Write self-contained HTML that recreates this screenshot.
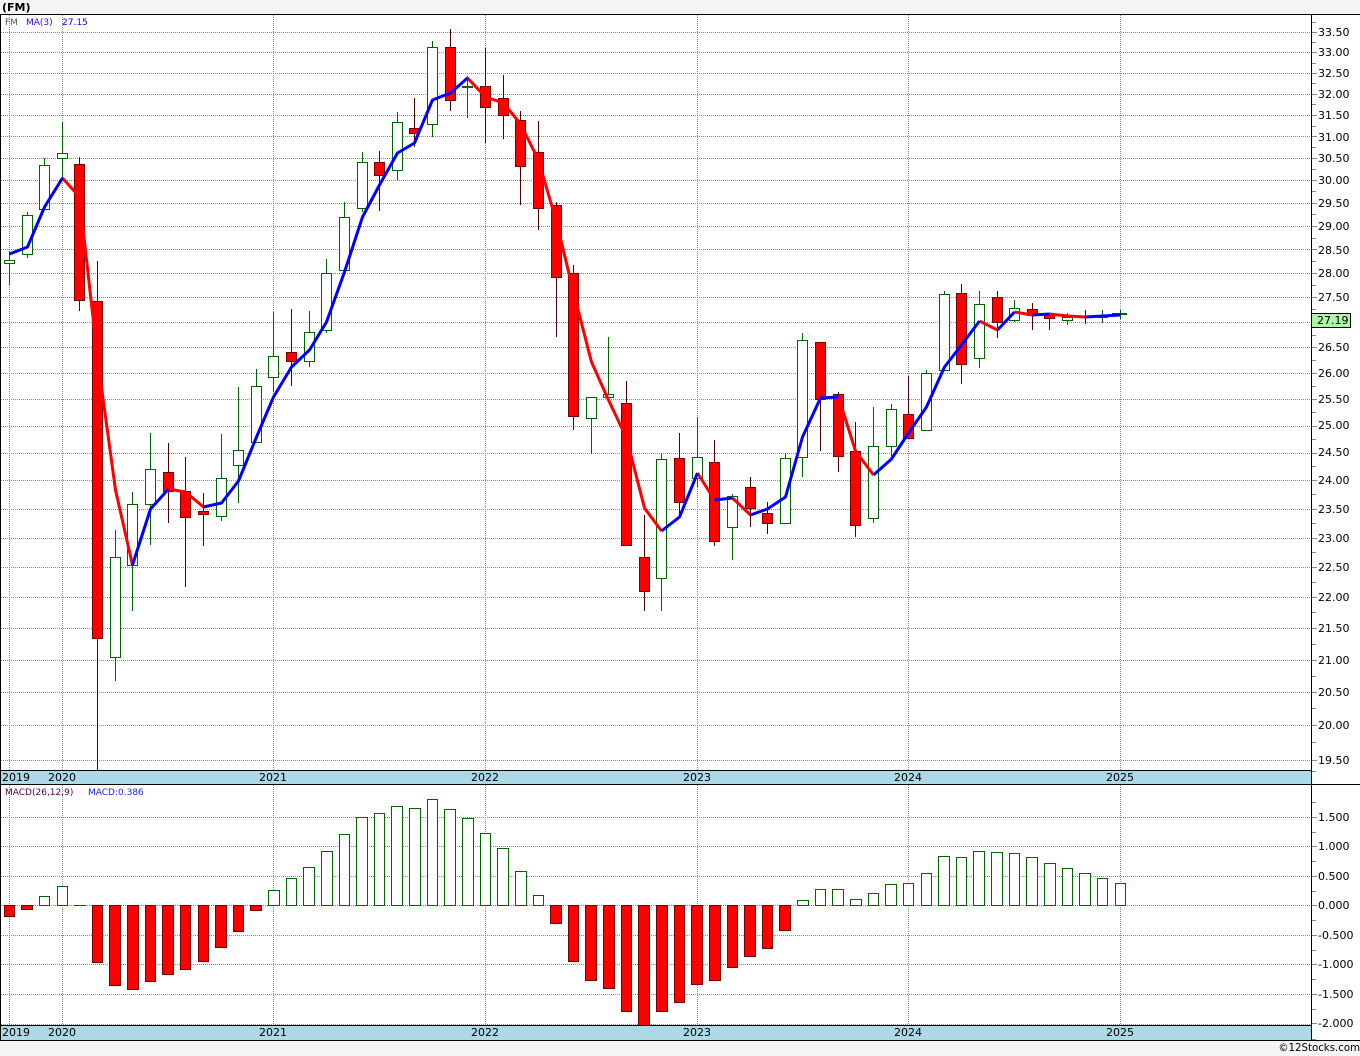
<!DOCTYPE html>
<html><head><meta charset="utf-8"><title>(FM)</title>
<style>
html,body{margin:0;padding:0;background:#f4f4f4}
svg{display:block;font-family:"DejaVu Sans","Liberation Sans",sans-serif}
text{fill:#000;font-size:11px}
.c{shape-rendering:crispEdges;fill:none}
.s{font-size:9px}
</style></head><body>
<svg width="1360" height="1056" viewBox="0 0 1360 1056" xmlns="http://www.w3.org/2000/svg">
<rect width="1360" height="1056" fill="#f4f4f4"/>
<rect x="0" y="14" width="1360" height="1027" fill="#fff"/>
<rect x="1" y="771" width="1310" height="13" fill="#add8e6"/>
<rect x="1" y="1026" width="1310" height="14" fill="#add8e6"/>

<path class="c" stroke="#8c8c8c" stroke-dasharray="1 1" d="M1 32.5H1311M1 52.5H1311M1 73.5H1311M1 94.5H1311M1 115.5H1311M1 136.5H1311M1 158.5H1311M1 180.5H1311M1 203.5H1311M1 226.5H1311M1 249.5H1311M1 273.5H1311M1 297.5H1311M1 322.5H1311M1 347.5H1311M1 373.5H1311M1 399.5H1311M1 426.5H1311M1 453.5H1311M1 480.5H1311M1 509.5H1311M1 538.5H1311M1 567.5H1311M1 597.5H1311M1 628.5H1311M1 660.5H1311M1 692.5H1311M1 725.5H1311M1 760.5H1311M1 817.5H1311M1 846.5H1311M1 876.5H1311M1 905.5H1311M1 935.5H1311M1 964.5H1311M1 994.5H1311M1 1024.5H1311"/>
<path class="c" stroke="#8c8c8c" stroke-dasharray="1 1" d="M9.5 15V770M62.5 15V770M273.5 15V770M485.5 15V770M697.5 15V770M908.5 15V770M1120.5 15V770M9.5 785V1025M62.5 785V1025M273.5 785V1025M485.5 785V1025M697.5 785V1025M908.5 785V1025M1120.5 785V1025"/>

<!-- green wicks -->
<path class="c" stroke="#006400" d="M9.5 251V285M27.5 212V258M44.5 158V209M62.5 122V178M115.5 530V681M132.5 492V611M150.5 433V545M221.5 434V521M238.5 387V503M256.5 369V443M273.5 312V392M309.5 311V367M326.5 259V333M344.5 202V271M362.5 152V212M397.5 112V180M432.5 41V137M467.5 76V118M591.5 397V454M608.5 337V397M661.5 454V611M697.5 417V487M732.5 494V560M785.5 453V523M802.5 333V477M873.5 407V523M891.5 404V457M926.5 370V430M944.5 291V370M979.5 291V368M1014.5 300V322M1067.5 313V325M1102.5 310V323M1120.5 310V319"/>
<!-- green bodies -->
<path class="c" stroke="#006400" style="fill:#fff" d="M4.5 260.5h10v3h-10zM22.5 215.5h10v39h-10zM39.5 165.5h10v44h-10zM57.5 153.5h10v5h-10zM110.5 557.5h10v100h-10zM127.5 504.5h10v61h-10zM145.5 469.5h10v35h-10zM216.5 478.5h10v38h-10zM233.5 450.5h10v15h-10zM251.5 386.5h10v56h-10zM268.5 356.5h10v21h-10zM304.5 332.5h10v29h-10zM321.5 273.5h10v57h-10zM339.5 217.5h10v53h-10zM357.5 162.5h10v46h-10zM392.5 122.5h10v48h-10zM427.5 47.5h10v77h-10zM586.5 397.5h10v21h-10zM603.5 394.5h10v3h-10zM656.5 459.5h10v119h-10zM692.5 457.5h10v21h-10zM727.5 496.5h10v31h-10zM780.5 458.5h10v65h-10zM797.5 340.5h10v117h-10zM868.5 446.5h10v72h-10zM886.5 409.5h10v37h-10zM921.5 373.5h10v57h-10zM939.5 294.5h10v76h-10zM974.5 304.5h10v54h-10zM1009.5 308.5h10v12h-10zM1062.5 317.5h10v3h-10zM1097.5 316.5h10v1h-10z"/>
<path class="c" stroke="#006400" stroke-width="2" d="M462 87h11M1112 314h15"/>

<!-- red wicks -->
<path class="c" stroke="#500000" d="M79.5 157V311M97.5 261V771M168.5 443V523M185.5 457V587M203.5 493V546M291.5 309V386M379.5 151V211M414.5 98V147M450.5 29V111M485.5 48V143M503.5 75V139M520.5 111V205M538.5 121V230M556.5 202V337M573.5 265V430M626.5 381V545M644.5 515V611M679.5 433V517M714.5 440V546M750.5 477V527M767.5 502V534M820.5 342V451M838.5 392V472M855.5 422V537M908.5 376V438M961.5 284V384M997.5 291V338M1032.5 303V330M1049.5 313V330M1085.5 310V324"/>
<!-- red bodies -->
<path class="c" stroke="#7a0000" style="fill:#f00" d="M74.5 164.5h10v136h-10zM92.5 301.5h10v337h-10zM163.5 472.5h10v19h-10zM180.5 491.5h10v26h-10zM198.5 511.5h10v3h-10zM286.5 352.5h10v9h-10zM374.5 162.5h10v13h-10zM409.5 128.5h10v5h-10zM445.5 47.5h10v53h-10zM480.5 86.5h10v21h-10zM498.5 98.5h10v17h-10zM515.5 120.5h10v46h-10zM533.5 152.5h10v56h-10zM551.5 205.5h10v72h-10zM568.5 273.5h10v143h-10zM621.5 403.5h10v142h-10zM639.5 557.5h10v34h-10zM674.5 458.5h10v44h-10zM709.5 462.5h10v79h-10zM745.5 487.5h10v21h-10zM762.5 513.5h10v10h-10zM815.5 342.5h10v57h-10zM833.5 394.5h10v62h-10zM850.5 451.5h10v74h-10zM903.5 414.5h10v24h-10zM956.5 293.5h10v71h-10zM992.5 297.5h10v25h-10zM1027.5 309.5h10v6h-10zM1044.5 313.5h10v5h-10zM1080.5 316.5h10v1h-10z"/>

<!-- MA(3) -->
<g fill="none" stroke-width="3" stroke-linejoin="round" stroke-linecap="butt">
<g stroke="#f00">
<polyline points="62.5,178 79.5,197 97.5,358 115.5,490 132.5,565"/>
<polyline points="168.5,489 185.5,492 203.5,507"/>
<polyline points="467.5,78 485.5,97 503.5,103 520.5,124 538.5,160 556.5,222 573.5,292 591.5,362 608.5,400 626.5,438 644.5,508 661.5,531"/>
<polyline points="697.5,473 714.5,500"/>
<polyline points="732.5,498 750.5,515"/>
<polyline points="838.5,397 855.5,451 873.5,475"/>
<polyline points="979.5,321 997.5,330"/>
<polyline points="1014.5,312 1032.5,315"/>
<polyline points="1049.5,314 1067.5,316 1085.5,317"/>
</g>
<g stroke="#00f">
<polyline points="9.5,254 27.5,247 44.5,207 62.5,178"/>
<polyline points="132.5,565 150.5,509 168.5,489"/>
<polyline points="203.5,507 221.5,503 238.5,481 256.5,437 273.5,397 291.5,367 309.5,350 326.5,322 344.5,272 362.5,217 379.5,185 397.5,153 414.5,143 432.5,100 450.5,93 467.5,78"/>
<polyline points="661.5,531 679.5,517 697.5,473"/>
<polyline points="714.5,500 732.5,498"/>
<polyline points="750.5,515 767.5,509 785.5,497 802.5,437 820.5,398 838.5,397"/>
<polyline points="873.5,475 891.5,459 908.5,433 926.5,407 944.5,367 961.5,345 979.5,321"/>
<polyline points="997.5,330 1014.5,312"/>
<polyline points="1032.5,315 1049.5,314"/>
<polyline points="1085.5,317 1102.5,316 1120.5,315"/>
</g>
</g>

<!-- MACD green -->
<path class="c" stroke="#006400" style="fill:#fff" d="M39.5 896.5h10V905.5h-10zM57.5 886.5h10V905.5h-10zM268.5 890.5h11V905.5h-11zM286.5 878.5h10V905.5h-10zM303.5 867.5h11V905.5h-11zM321.5 851.5h11V905.5h-11zM339.5 834.5h10V905.5h-10zM356.5 817.5h11V905.5h-11zM374.5 813.5h10V905.5h-10zM391.5 806.5h11V905.5h-11zM409.5 808.5h11V905.5h-11zM427.5 799.5h10V905.5h-10zM444.5 809.5h11V905.5h-11zM462.5 818.5h11V905.5h-11zM480.5 833.5h10V905.5h-10zM497.5 848.5h11V905.5h-11zM515.5 871.5h11V905.5h-11zM533.5 895.5h10V905.5h-10zM797.5 900.5h11V905.5h-11zM815.5 889.5h10V905.5h-10zM832.5 889.5h11V905.5h-11zM850.5 899.5h11V905.5h-11zM868.5 893.5h10V905.5h-10zM885.5 884.5h11V905.5h-11zM903.5 883.5h10V905.5h-10zM921.5 873.5h10V905.5h-10zM938.5 856.5h11V905.5h-11zM956.5 857.5h10V905.5h-10zM973.5 851.5h11V905.5h-11zM991.5 852.5h11V905.5h-11zM1009.5 853.5h10V905.5h-10zM1026.5 857.5h11V905.5h-11zM1044.5 863.5h11V905.5h-11zM1062.5 868.5h10V905.5h-10zM1079.5 873.5h11V905.5h-11zM1097.5 878.5h10V905.5h-10zM1115.5 883.5h10V905.5h-10z"/>
<path class="c" stroke="#006400" d="M74 905.5h12"/>
<!-- MACD red -->
<path class="c" stroke="#7a0000" style="fill:#f00" d="M4.5 905.5h10V916.5h-10zM21.5 905.5h11V909.5h-11zM92.5 905.5h10V962.5h-10zM109.5 905.5h11V985.5h-11zM127.5 905.5h11V989.5h-11zM145.5 905.5h10V981.5h-10zM162.5 905.5h11V974.5h-11zM180.5 905.5h10V969.5h-10zM198.5 905.5h10V961.5h-10zM215.5 905.5h11V947.5h-11zM233.5 905.5h10V931.5h-10zM250.5 905.5h11V910.5h-11zM550.5 905.5h11V923.5h-11zM568.5 905.5h10V961.5h-10zM585.5 905.5h11V980.5h-11zM603.5 905.5h11V988.5h-11zM621.5 905.5h10V1011.5h-10zM638.5 905.5h11V1025.5h-11zM656.5 905.5h11V1011.5h-11zM674.5 905.5h10V1002.5h-10zM691.5 905.5h11V984.5h-11zM709.5 905.5h11V980.5h-11zM727.5 905.5h10V967.5h-10zM744.5 905.5h11V956.5h-11zM762.5 905.5h10V948.5h-10zM779.5 905.5h11V930.5h-11z"/>

<!-- axis ticks -->
<path class="c" stroke="#888" d="M1312 32.5h5M1312 52.5h5M1312 73.5h5M1312 94.5h5M1312 115.5h5M1312 136.5h5M1312 158.5h5M1312 180.5h5M1312 203.5h5M1312 226.5h5M1312 249.5h5M1312 273.5h5M1312 297.5h5M1312 347.5h5M1312 373.5h5M1312 399.5h5M1312 426.5h5M1312 453.5h5M1312 480.5h5M1312 509.5h5M1312 538.5h5M1312 567.5h5M1312 597.5h5M1312 628.5h5M1312 660.5h5M1312 692.5h5M1312 725.5h5M1312 760.5h5M1312 22.5h4M1312 42.5h4M1312 63.5h4M1312 83.5h4M1312 104.5h4M1312 126.5h4M1312 147.5h4M1312 169.5h4M1312 191.5h4M1312 214.5h4M1312 238.5h4M1312 261.5h4M1312 285.5h4M1312 309.5h4M1312 335.5h4M1312 360.5h4M1312 386.5h4M1312 412.5h4M1312 439.5h4M1312 466.5h4M1312 494.5h4M1312 523.5h4M1312 552.5h4M1312 582.5h4M1312 612.5h4M1312 644.5h4M1312 676.5h4M1312 708.5h4M1312 742.5h4M1312 771.5h4M1312 817.5h5M1312 846.5h5M1312 876.5h5M1312 905.5h5M1312 935.5h5M1312 964.5h5M1312 994.5h5M1312 1023.5h5M1312 802.5h4M1312 832.5h4M1312 861.5h4M1312 891.5h4M1312 920.5h4M1312 950.5h4M1312 979.5h4M1312 1009.5h4M1312 1039.5h4"/>

<!-- frame -->
<path class="c" stroke="#000" d="M0 14.5H1360M0 784.5H1360M0 1040.5H1360M0 770.5H1311M0 1025.5H1311M.5 14V1041M1311.5 14V1041"/>

<!-- price box -->
<rect x="1311.5" y="313.5" width="39" height="14" fill="#b0f5a8" stroke="#000" shape-rendering="crispEdges"/>

<g text-anchor="start">
<text x="1318" y="36">33.50</text><text x="1318" y="56">33.00</text><text x="1318" y="77">32.50</text><text x="1318" y="98">32.00</text><text x="1318" y="119">31.50</text><text x="1318" y="141">31.00</text><text x="1318" y="162">30.50</text><text x="1318" y="184">30.00</text><text x="1318" y="207">29.50</text><text x="1318" y="230">29.00</text><text x="1318" y="254">28.50</text><text x="1318" y="277">28.00</text><text x="1318" y="301">27.50</text><text x="1317" y="324">27.19</text><text x="1318" y="351">26.50</text><text x="1318" y="377">26.00</text><text x="1318" y="403">25.50</text><text x="1318" y="429">25.00</text><text x="1318" y="456">24.50</text><text x="1318" y="484">24.00</text><text x="1318" y="513">23.50</text><text x="1318" y="542">23.00</text><text x="1318" y="571">22.50</text><text x="1318" y="601">22.00</text><text x="1318" y="632">21.50</text><text x="1318" y="664">21.00</text><text x="1318" y="696">20.50</text><text x="1318" y="729">20.00</text><text x="1318" y="764">19.50</text>
<text x="1318" y="821">1.500</text><text x="1318" y="850">1.000</text><text x="1318" y="880">0.500</text><text x="1318" y="909">0.000</text><text x="1318" y="939">-0.500</text><text x="1318" y="968">-1.000</text><text x="1318" y="998">-1.500</text><text x="1318" y="1027">-2.000</text>
<text x="2" y="781">2019</text><text x="2" y="1036">2019</text>
</g>
<g text-anchor="middle">
<text x="62" y="781">2020</text><text x="273" y="781">2021</text><text x="485" y="781">2022</text><text x="697" y="781">2023</text><text x="908" y="781">2024</text><text x="1120" y="781">2025</text>
<text x="62" y="1036">2020</text><text x="273" y="1036">2021</text><text x="485" y="1036">2022</text><text x="697" y="1036">2023</text><text x="908" y="1036">2024</text><text x="1120" y="1036">2025</text>
</g>
<text x="2" y="11" style="font-weight:bold">(FM)</text>
<text class="s" x="5" y="25" style="fill:#3a6a3a">FM</text>
<text class="s" x="26" y="25" style="fill:#4000e0">MA(3)</text>
<text class="s" x="62" y="25" style="fill:#0000ff">27.15</text>
<text class="s" x="5" y="795" style="fill:#500050">MACD(26,12,9)</text>
<text class="s" x="88" y="795" style="fill:#2020ff">MACD:0.386</text>
<text x="1360" y="1051" text-anchor="end" style="font-size:10.2px">©12Stocks.com</text>
</svg>
</body></html>
